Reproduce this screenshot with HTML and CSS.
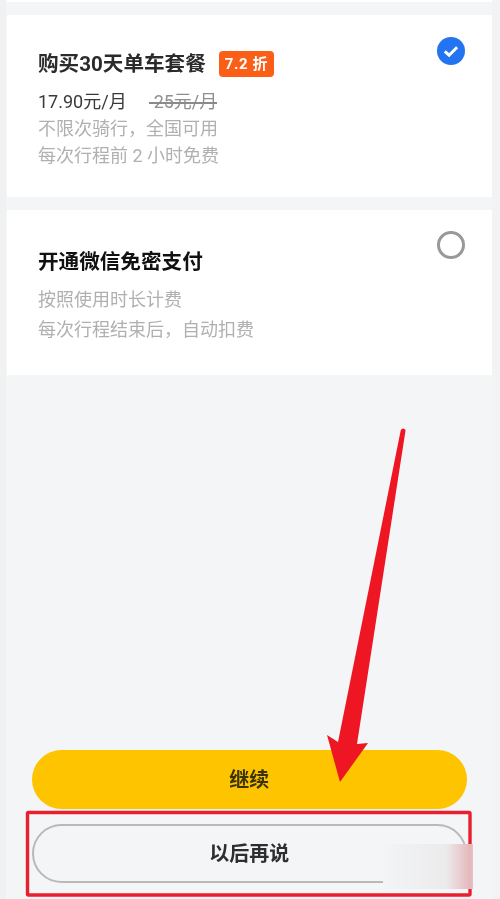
FILE: index.html
```html
<!DOCTYPE html>
<html lang="zh-CN">
<head>
<meta charset="utf-8">
<title>单车套餐</title>
<link rel="stylesheet" href="styles.css">
</head>
<body>
<main class="page">
  <div class="top-edge"></div>
  <section class="card card-plan">
    <div class="card-body">
      <div class="title-row">
        <h2 class="title title-plan">购买30天单车套餐</h2>
        <span class="badge">7.2 折</span>
      </div>
      <p class="price"><span>17.90元/月</span><span class="old-price">25元/月</span></p>
      <p class="note note-tight">不限次骑行，全国可用</p>
      <p class="note note-tight">每次行程前 2 小时免费</p>
    </div>
    <svg class="radio" viewBox="0 0 28 28" width="28" height="28" aria-hidden="true">
      <circle cx="14" cy="14" r="14" fill="#2374f0"/>
      <path d="M7.8 14.4l4.3 3.8 8-8" fill="none" stroke="#fff" stroke-width="3"/>
    </svg>
  </section>
  <section class="card card-wechat">
    <div class="card-body">
      <h2 class="title title-wechat">开通微信免密支付</h2>
      <p class="note note-first">按照使用时长计费</p>
      <p class="note note-second">每次行程结束后，自动扣费</p>
    </div>
    <svg class="radio" viewBox="0 0 28 28" width="28" height="28" aria-hidden="true">
      <circle cx="14" cy="14" r="12.5" fill="none" stroke="#999" stroke-width="3"/>
    </svg>
  </section>
  <div class="actions">
    <button class="btn btn-primary" type="button">继续</button>
    <button class="btn btn-secondary" type="button">以后再说</button>
  </div>
  <svg class="annotation" viewBox="0 0 500 899" width="500" height="899" aria-hidden="true">
    <rect x="27.5" y="812.5" width="442.5" height="82.5" rx="1" fill="none" stroke="#e8202e" stroke-width="3.4" stroke-linejoin="round"/>
    <path d="M400.8 430 Q403 427 405.6 430 L357 744 L368 743 L340 782 L327 735 L338 742 Z" fill="#ee1622"/>
  </svg>
  <div class="watermark"></div>
</main>
</body>
</html>
```
FILE: styles.css
```css
* { box-sizing: border-box; }
html, body { margin: 0; padding: 0; }
body { background: #f4f5f7; font-family: "Roboto", "Noto Sans CJK SC", sans-serif; }
.page {
  position: relative;
  width: 500px;
  height: 899px;
  overflow: hidden;
  display: flex;
  flex-direction: column;
  padding: 0 8px 16px 6.5px;
  background: linear-gradient(90deg, #f0f1f1 6.5px, #f4f5f7 6.5px, #f4f5f7 492px, #f2f3f3 492px);
  filter: blur(0.4px);
}
.top-edge { height: 2px; background: #fff; flex: none; }
.card {
  background: #fff;
  display: flex;
  justify-content: space-between;
  align-items: flex-start;
  padding-left: 31.5px;
  padding-right: 27px;
  flex: none;
}
.card-plan { height: 182px; margin-top: 13px; padding-top: 22px; }
.card-wechat { height: 165px; margin-top: 13px; padding-top: 21px; }
.card-body { display: flex; flex-direction: column; }
.title { margin: 0; font-size: 20.6px; line-height: 30px; font-weight: 700; color: #222; }
.title-plan { color: #2b2b2b; }
.title-wechat { color: #111; margin-top: 16px; }
.title-row { display: flex; align-items: center; gap: 13px; margin-top: 12px; }
.badge {
  background: #fb5f17;
  color: #fff;
  font-size: 15px;
  line-height: 26px;
  height: 26px;
  padding: 0 6px;
  font-weight: 700;
  border-radius: 4px;
  letter-spacing: 0.6px;
  white-space: nowrap;
}
.price { margin: 10px 0 0; font-size: 18px; line-height: 26px; color: #3a3a3a; display: flex; gap: 22px; }
.old-price { position: relative; color: #8f8f8f; padding-left: 5px; }
.old-price::after {
  content: "";
  position: absolute;
  left: 0;
  right: 0;
  top: 13px;
  height: 1.5px;
  background: #8a8a8a;
}
.note { margin: 0; font-size: 18px; line-height: 28px; color: #b0b0b0; }
.note-tight { line-height: 27px; }
.note-first { margin-top: 9px; }
.note-second { margin-top: 2px; }
.radio { flex: none; }
.actions {
  margin-top: auto;
  padding: 0 25.5px;
  display: flex;
  flex-direction: column;
  gap: 15px;
}
.btn {
  display: block;
  width: 100%;
  height: 59px;
  border-radius: 30px;
  font: 700 20px/1 "Roboto", "Noto Sans CJK SC", sans-serif;
  color: #2e2e2e;
  padding: 0;
}
.btn-primary { background: #fec400; border: 0; color: #3a3200; }
.btn-secondary { background: transparent; border: 2px solid #b9b9b9; }
.watermark {
  position: absolute;
  left: 383px;
  top: 844px;
  width: 90px;
  height: 45px;
  background: linear-gradient(90deg, #f3f4f6 0%, #ebebec 70%, #e5b7bb 97%, #e8c4c7 100%);
}
.annotation { position: absolute; left: 0; top: 0; }
```
